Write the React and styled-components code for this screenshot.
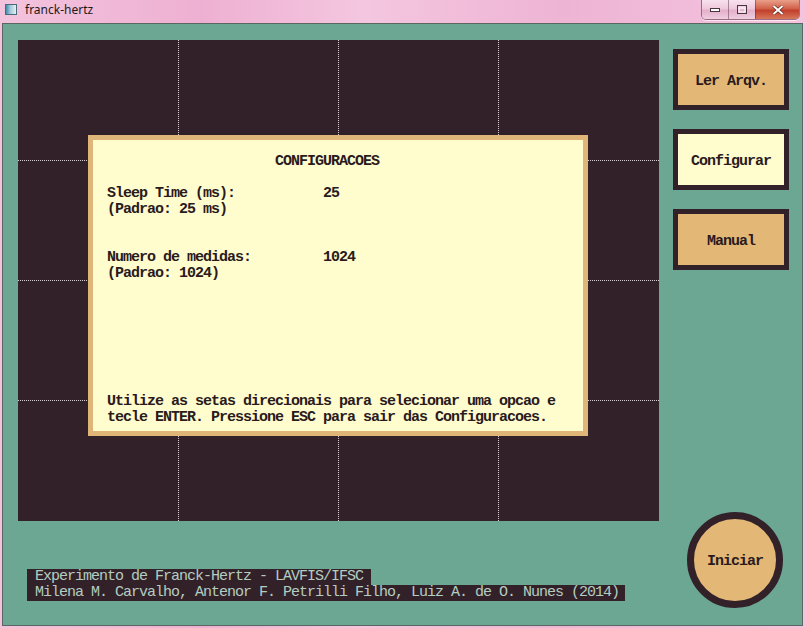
import React from "react";
import styled, { createGlobalStyle } from "styled-components";

const GlobalStyle = createGlobalStyle`
  html, body {
    margin: 0;
    padding: 0;
    background: #f2bcd9;
    overflow: hidden;
  }
`;

const DARK = "#33212a";
const TEAL = "#6ba793";
const TAN = "#e3b877";
const CREAM = "#fffccd";
const MONO = `"Liberation Mono", "DejaVu Sans Mono", monospace`;

const Frame = styled.div`
  width: 806px;
  height: 628px;
  display: flex;
  flex-direction: column;
  box-sizing: border-box;
  background: linear-gradient(90deg, #f3c3dd 0%, #eeb0d2 25%, #f4c6df 45%, #eeb4d4 70%, #f4c4de 100%);
`;

const TitleBar = styled.div`
  height: 23px;
  flex: none;
  display: flex;
  align-items: flex-start;
  padding-left: 5px;
`;

const AppIcon = styled.div`
  width: 12px;
  height: 11px;
  margin-top: 4px;
  border: 1px solid #4a6a78;
  background: linear-gradient(90deg, #3f8aa8 0%, #9ec6d8 40%, #e8f0f4 100%);
  box-sizing: border-box;
`;

const Title = styled.span`
  margin-left: 8px;
  margin-top: 2px;
  font-family: "Noto Sans", "Open Sans", sans-serif;
  font-size: 12px;
  line-height: 16px;
  color: #1a1a1a;
`;

const Caption = styled.div`
  margin-left: auto;
  margin-right: 6px;
  display: flex;
  height: 19px;
  border: 1px solid rgba(80, 40, 60, 0.55);
  border-top: none;
  border-radius: 0 0 5px 5px;
  overflow: hidden;
  box-shadow: 0 1px 0 rgba(255, 255, 255, 0.6);
`;

const CapButton = styled.div`
  width: ${(p) => p.$w}px;
  height: 100%;
  display: flex;
  align-items: center;
  justify-content: center;
  border-left: ${(p) => (p.$first ? "none" : "1px solid rgba(80, 40, 60, 0.45)")};
  background: ${(p) =>
    p.$close
      ? "linear-gradient(180deg, #e9a08a 0%, #d2614a 45%, #c0402c 55%, #d8785a 100%)"
      : "linear-gradient(180deg, #f8e2ee 0%, #efc8dc 45%, #e4b0cb 55%, #f0cde0 100%)"};
`;

const Client = styled.div`
  flex: 1;
  margin: 0 3px 2px 2px;
  border: 1px solid #5b6661;
  background: ${TEAL};
  display: grid;
  grid-template-columns: 641px 1fr;
  padding: 16px 0 0 15px;
  min-height: 0;
`;

const LeftColumn = styled.div`
  display: flex;
  flex-direction: column;
`;

const Plot = styled.div`
  width: 641px;
  height: 481px;
  background: ${DARK};
  position: relative;
`;

const GridSvg = styled.svg`
  display: block;
`;

const Dialog = styled.div`
  position: absolute;
  left: 70px;
  top: 95px;
  width: 500px;
  height: 301px;
  box-sizing: border-box;
  border: 5px solid #dfb677;
  background: ${CREAM};
  padding: 14px 14px 5px;
  display: flex;
  flex-direction: column;
  font-family: ${MONO};
  font-size: 15px;
  letter-spacing: -1px;
  line-height: 16px;
  font-weight: bold;
  color: #2a1a1c;
  white-space: pre;
`;

const DialogTitle = styled.div`
  padding-left: 168px;
  margin-bottom: 16px;
`;

const Field = styled.div`
  display: grid;
  grid-template-columns: 216px auto;
  margin-bottom: 32px;
`;

const Instructions = styled.div`
  margin-top: auto;
`;

const Footer = styled.div`
  margin-top: 48px;
  margin-left: 9px;
  display: flex;
  flex-direction: column;
  align-items: flex-start;
  font-family: ${MONO};
  font-size: 15px;
  letter-spacing: -1px;
  line-height: 16px;
  color: #b3cdc0;
  white-space: pre;
`;

const FooterLine = styled.span`
  background: ${DARK};
  padding: 0 ${(p) => p.$right}px 0 8px;
`;

const RightColumn = styled.div`
  display: flex;
  flex-direction: column;
  align-items: flex-start;
  padding: 9px 0 17px 14px;
  gap: 19px;
`;

const PanelButton = styled.div`
  width: 116px;
  height: 61px;
  box-sizing: border-box;
  border: 5px solid ${DARK};
  background: ${(p) => (p.$active ? CREAM : TAN)};
  display: flex;
  align-items: center;
  justify-content: center;
  padding-top: 3px;
  font-family: ${MONO};
  font-size: 15px;
  letter-spacing: -1px;
  font-weight: bold;
  color: #2a1a1c;
`;

const StartButton = styled.div`
  margin-top: auto;
  margin-left: 14px;
  width: 96px;
  height: 96px;
  box-sizing: border-box;
  border-radius: 50%;
  border: 7px solid ${DARK};
  background: ${TAN};
  display: flex;
  align-items: center;
  justify-content: center;
  padding-top: 3px;
  font-family: ${MONO};
  font-size: 15px;
  letter-spacing: -1px;
  font-weight: bold;
  color: #2a1a1c;
`;

const PlotGrid = () => (
  <GridSvg width="641" height="481">
    {[160, 320, 480].map((x) => (
      <line key={"v" + x} x1={x + 0.5} y1="0" x2={x + 0.5} y2="481" stroke="#d8d0d2" strokeWidth="1" strokeDasharray="1 1" />
    ))}
    {[120, 240, 360].map((y) => (
      <line key={"h" + y} x1="0" y1={y + 0.5} x2="641" y2={y + 0.5} stroke="#d8d0d2" strokeWidth="1" strokeDasharray="1 1" />
    ))}
  </GridSvg>
);

export default function App() {
  return (
    <>
      <GlobalStyle />
      <Frame>
        <TitleBar>
          <AppIcon />
          <Title>franck-hertz</Title>
          <Caption>
            <CapButton $w={26} $first>
              <svg width="10" height="4"><rect x="0.5" y="0.5" width="9" height="3" fill="#fff" stroke="#4a3440" /></svg>
            </CapButton>
            <CapButton $w={26}>
              <svg width="10" height="9"><rect x="0.5" y="0.5" width="9" height="8" fill="none" stroke="#4a3440" /><rect x="2" y="3" width="6" height="4" fill="none" stroke="#fff" /></svg>
            </CapButton>
            <CapButton $w={43} $close>
              <svg width="12" height="10"><path d="M1.5 1 L10.5 9 M10.5 1 L1.5 9" stroke="#5a1f18" strokeWidth="3.2" /><path d="M1.5 1 L10.5 9 M10.5 1 L1.5 9" stroke="#fff" strokeWidth="2" /></svg>
            </CapButton>
          </Caption>
        </TitleBar>
        <Client>
          <LeftColumn>
            <Plot>
              <PlotGrid />
              <Dialog>
                <DialogTitle>CONFIGURACOES</DialogTitle>
                <Field>
                  <span>Sleep Time (ms):</span>
                  <span>25</span>
                  <span>(Padrao: 25 ms)</span>
                </Field>
                <Field>
                  <span>Numero de medidas:</span>
                  <span>1024</span>
                  <span>(Padrao: 1024)</span>
                </Field>
                <Instructions>
                  {"Utilize as setas direcionais para selecionar uma opcao e\ntecle ENTER. Pressione ESC para sair das Configuracoes."}
                </Instructions>
              </Dialog>
            </Plot>
            <Footer>
              <FooterLine $right={8}>Experimento de Franck-Hertz - LAVFIS/IFSC</FooterLine>
              <FooterLine $right={6}>Milena M. Carvalho, Antenor F. Petrilli Filho, Luiz A. de O. Nunes (2014)</FooterLine>
            </Footer>
          </LeftColumn>
          <RightColumn>
            <PanelButton>Ler Arqv.</PanelButton>
            <PanelButton $active>Configurar</PanelButton>
            <PanelButton>Manual</PanelButton>
            <StartButton>Iniciar</StartButton>
          </RightColumn>
        </Client>
      </Frame>
    </>
  );
}
